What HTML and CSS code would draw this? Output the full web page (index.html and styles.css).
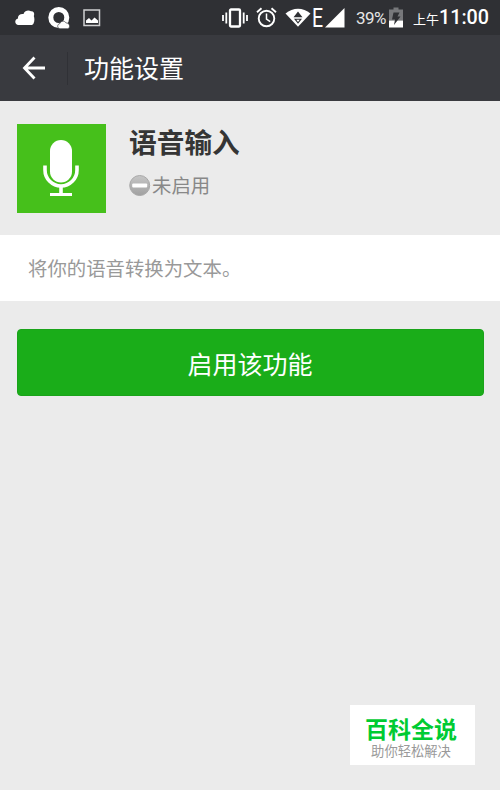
FILE: index.html
```
<!DOCTYPE html>
<html lang="zh-CN">
<head>
    <meta charset="utf-8">
    <title>功能设置</title>
    <link rel="stylesheet" href="styles.css">
</head>
<body>
    <div class="status-bar">
        <svg class="cloud" width="20" height="16" viewBox="0 0 20 16">
            <path fill="#fff" d="M3 15C-.5 14.500-.8 9.500 3 8.500 2.500 5 5.500 3.500 8.500 4 10 0 14 0 16 1.300 19.500 1 19.500 4.500 18.800 6 19.700 8.500 19.500 11 18.700 13 18.200 14.500 17.500 15 16 15Z"/>
        </svg>
        <svg class="browser" width="22" height="22" viewBox="0 0 22 22">
            <circle cx="10.800" cy="10.500" r="8" fill="none" stroke="#fff" stroke-width="5"/>
            <path fill="#fff" stroke="#2f3034" stroke-width=".6" d="M12 21.700C8.800 21.300 9 17 12 16.500 13 13.500 17 13.500 18 16 22 15.500 22.800 21.300 19.500 21.700Z"/>
        </svg>
        <svg class="picture" width="18" height="18" viewBox="0 0 18 18">
            <rect x="1" y="1" width="15.500" height="15.500" fill="none" stroke="#d0d0d1" stroke-width="1.500"/>
            <path fill="#fff" d="M3 14V11.500L6 9 8.500 11.500 11.500 8.500 15 11.500V14Z"/>
        </svg>
        <div class="system">
            <svg width="26" height="20" viewBox="0 0 26 20">
                <g fill="none" stroke="#fff">
                    <rect x="8" y="1.500" width="10" height="17" rx="1" stroke-width="2.300"/>
                    <path stroke-width="1.800" d="M1 7v6M4.300 4.500v11M21.700 4.500v11M25 7v6"/>
                </g>
            </svg>
            <svg class="alarm" width="21" height="21" viewBox="0 0 21 21">
                <g fill="none" stroke="#fff">
                    <circle cx="10.500" cy="11.500" r="7.800" stroke-width="1.900"/>
                    <path stroke-width="1.900" d="M1 5.200 5.500 1.300M20 5.200 15.500 1.300"/>
                    <path stroke-width="1.500" d="M10.500 6.500v5.500l3.700 2.700"/>
                </g>
            </svg>
            <svg class="wifi" width="26" height="19" viewBox="0 0 26 19">
                <path fill="#fff" d="M.5 5.500C8-.8 18-.8 25.500 5.500L13 18.800Z"/>
                <path fill="#2f3034" d="M13 3.500 17.500 9.300H8.500ZM9 10.800H17L13 15.800Z"/>
                <path fill="#fff" d="M11.300 11.800h3.400L13 14Z"/>
            </svg>
            <span class="network">E</span>
            <svg class="signal" width="20" height="20" viewBox="0 0 20 20">
                <path fill="#fff" d="M0 19.500 19.500 0V19.500Z"/>
            </svg>
            <span class="percent">39%</span>
            <svg class="battery" width="14" height="21" viewBox="0 0 14 21">
                <path fill="#77787b" d="M4.500 0.500h5v2H14v11H0V2.500H4.500Z"/>
                <path fill="#fff" d="M0 13.500h14v7H0Z"/>
                <path fill="#2f3034" d="M4.500 5.500H10.500L8.500 9.500H11.500L5 18 6 12.500H3Z"/>
            </svg>
            <span class="ampm">上午</span>
            <span class="clock">11:00</span>
        </div>
    </div>

    <div class="title-bar">
        <svg class="back" width="24" height="24" viewBox="0 0 24 24">
            <path fill="none" stroke="#fff" stroke-width="2.800" d="M12.500 1.500 2.500 12 12.500 22.500M2.500 12H23"/>
        </svg>
        <span class="divider"></span>
        <h1>功能设置</h1>
    </div>

    <div class="feature">
        <div class="feature-icon">
            <svg width="89" height="89" viewBox="0 0 89 89">
                <rect x="33" y="16" width="22" height="42.500" rx="11" fill="#fff"/>
                <g fill="none" stroke="#fff" stroke-width="3.600">
                    <path d="M28 41.500V46a16 16 0 0 0 32 0V41.500"/>
                    <path d="M44 62V71"/>
                    <path stroke-width="3" d="M33 70.500H55"/>
                </g>
            </svg>
        </div>
        <div class="feature-info">
            <h2>语音输入</h2>
            <div class="state">
                <svg width="22" height="22" viewBox="0 0 22 22">
                    <defs>
                        <linearGradient id="disc" x1="0" y1="0" x2="0" y2="1">
                            <stop offset="0" stop-color="#c6c6c6"/>
                            <stop offset="1" stop-color="#a0a0a0"/>
                        </linearGradient>
                    </defs>
                    <circle cx="10.700" cy="10.500" r="10" fill="url(#disc)" stroke="#a8a8a8"/>
                    <rect x="3.200" y="8.500" width="15" height="4" rx="1" fill="#fff"/>
                </svg>
                <span>未启用</span>
            </div>
        </div>
    </div>

    <p class="description">将你的语音转换为文本。</p>

    <button class="enable" type="button">启用该功能</button>

    <div class="watermark">
        <strong>百科全说</strong>
        <span>助你轻松解决</span>
    </div>
</body>
</html>
```
FILE: styles.css
```
* {
    box-sizing: border-box;
}

body {
    margin: 0;
    height: 790px;
    background: #ebebeb;
    font-family: Roboto, "Noto Sans CJK SC", sans-serif;
    overflow: hidden;
}

svg {
    display: block;
    flex: none;
}

h1, h2, p {
    margin: 0;
}

.status-bar {
    display: flex;
    align-items: center;
    height: 35px;
    padding: 0 11px 0 15px;
    background: #2f3034;
    color: #fff;
}

.browser {
    margin-left: 13px;
}

.picture {
    margin-left: 13px;
}

.system {
    display: flex;
    align-items: center;
    margin-left: auto;
    line-height: 35px;
    white-space: nowrap;
}

.alarm {
    margin-left: 8px;
}

.wifi {
    margin-left: 8px;
}

.network {
    width: 13px;
    margin-left: 1px;
    padding-top: 1px;
    font-size: 25px;
    transform: scaleX(.78);
    transform-origin: left;
}

.percent {
    width: 31px;
    margin-left: 11px;
    padding-top: 2px;
    font-size: 17px;
    letter-spacing: -.5px;
    color: #e6e6e6;
}

.battery {
    margin-left: 2px;
}

.ampm {
    width: 26px;
    margin-left: 10px;
    padding-top: 3px;
    font-size: 13px;
}

.clock {
    width: 50px;
    font-size: 19.700px;
    font-weight: 500;
}

.title-bar {
    display: flex;
    align-items: center;
    height: 66px;
    padding-left: 22px;
    background: #393a3f;
    color: #fff;
}

.divider {
    width: 1px;
    height: 33px;
    margin: 0 16px 0 21px;
    background: #303136;
}

.title-bar h1 {
    padding-top: 3px;
    font-size: 25px;
    font-weight: 400;
    line-height: 36px;
}

.feature {
    display: flex;
    height: 134px;
    padding: 23px 17px 0;
}

.feature-icon {
    width: 89px;
    height: 89px;
    background: #46c01b;
}

.feature-info {
    margin-left: 22px;
}

.feature-info h2 {
    height: 38px;
    padding-left: 1px;
    font-size: 27.700px;
    font-weight: 700;
    line-height: 39px;
    color: #353535;
}

.state {
    display: flex;
    align-items: center;
    height: 28px;
    margin-top: 10px;
    padding-left: 1px;
    font-size: 19.400px;
    line-height: 28px;
    color: #888;
}

.state span {
    padding: 1px 0 0 1px;
}

.description {
    height: 66px;
    padding: 2px 0 0 28px;
    background: #fff;
    font-size: 19.400px;
    line-height: 66px;
    color: #999;
}

.enable {
    display: block;
    width: 467px;
    height: 67px;
    margin: 28px auto 0;
    padding: 0;
    border: 1px solid #1aa31a;
    border-radius: 4px;
    background: #1aad19;
    color: #fff;
    font: inherit;
    font-size: 25px;
}

.watermark {
    position: absolute;
    right: 25px;
    bottom: 25px;
    display: flex;
    flex-direction: column;
    align-items: center;
    width: 125px;
    height: 60px;
    padding: 11px 3px 0 0;
    background: #fff;
}

.watermark strong {
    font-size: 23px;
    line-height: 30px;
    color: #00cb32;
}

.watermark span {
    margin-top: -2px;
    font-size: 13.300px;
    line-height: 15px;
    color: #999;
}
```
